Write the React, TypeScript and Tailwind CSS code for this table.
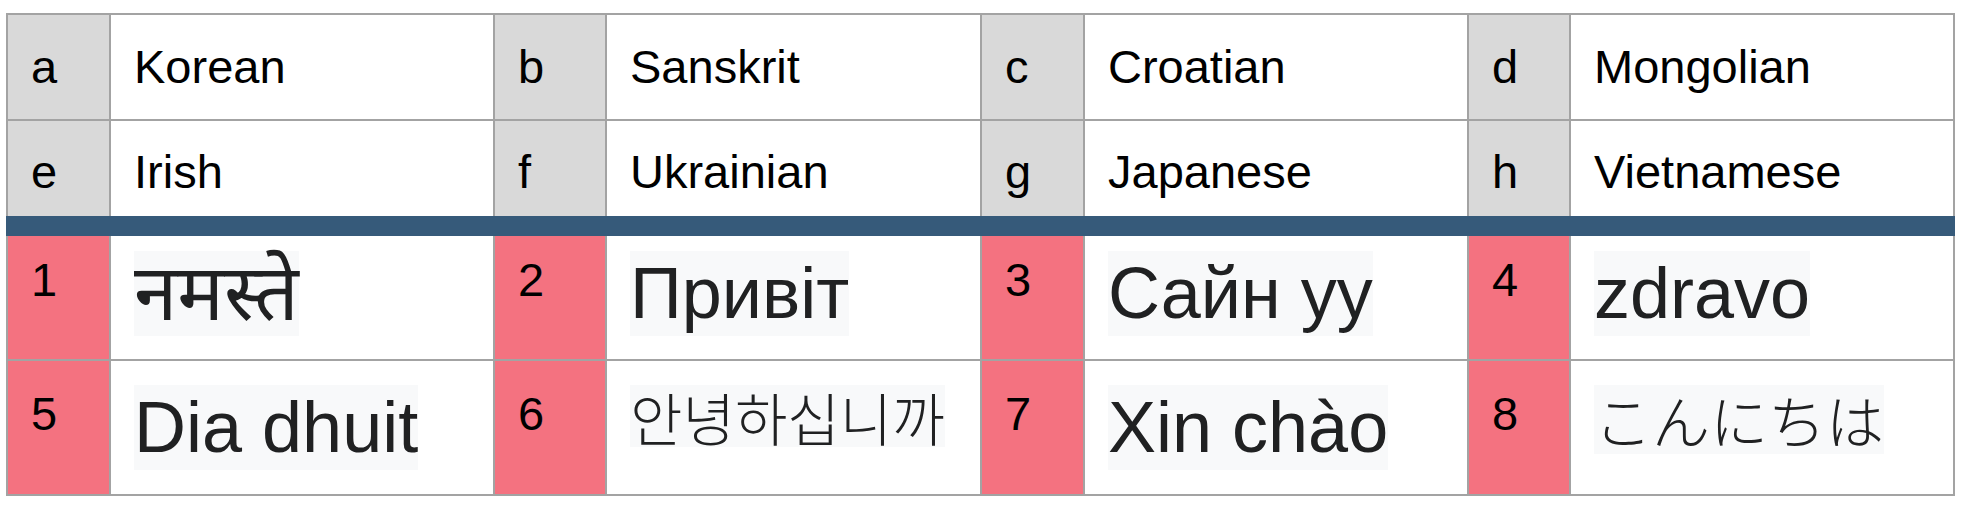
const cols =
  "grid grid-cols-[103px_384px_112px_375px_103px_384px_102px_382px]";

const header = [
  ["a", "Korean", "b", "Sanskrit", "c", "Croatian", "d", "Mongolian"],
  ["e", "Irish", "f", "Ukrainian", "g", "Japanese", "h", "Vietnamese"],
];

type Phrase = { text: string; cls: string };

const rowA: [string, Phrase][] = [
  ["1", { text: "नमस्ते", cls: "text-[78px] leading-[85px]" }],
  ["2", { text: "Привіт", cls: "text-[72px] leading-[85px]" }],
  ["3", { text: "Сайн уу", cls: "text-[72px] leading-[85px]" }],
  ["4", { text: "zdravo", cls: "text-[72px] leading-[85px]" }],
];

const rowB: [string, Phrase][] = [
  ["5", { text: "Dia dhuit", cls: "text-[72px] leading-[85px]" }],
  [
    "6",
    {
      text: "안녕하십니까",
      cls: "text-[57px] leading-[62px] font-light font-['Noto_Sans_CJK_KR',sans-serif]",
    },
  ],
  ["7", { text: "Xin chào", cls: "text-[72px] leading-[85px]" }],
  [
    "8",
    {
      text: "こんにちは",
      cls: "text-[58px] leading-[69px] font-light font-['Noto_Sans_CJK_JP',sans-serif]",
    },
  ],
];

const HeadRow = ({ cells, className }: { cells: string[]; className: string }) => (
  <div className={`${cols} ${className}`}>
    {cells.map((c, i) => (
      <div
        key={i}
        className={`flex items-center pl-[23px] text-[47px] leading-[54px] text-black ${
          i % 2 === 0 ? "bg-[#d9d9d9]" : "bg-white"
        } ${i < 7 ? "border-r-2 border-[#a3a3a3]" : ""}`}
      >
        {c}
      </div>
    ))}
  </div>
);

const BodyRow = ({
  items,
  className,
  pad,
}: {
  items: [string, Phrase][];
  className: string;
  pad: string;
}) => (
  <div className={`${cols} ${className}`}>
    {items.map(([n, p], i) => (
      <div key={n} className="contents">
        <div
          className={`${pad} pl-[23px] bg-[#f47280] text-[47px] leading-[57px] text-black border-r-2 border-[#a3a3a3]`}
        >
          {n}
        </div>
        <div
          className={`${pad} pl-[23px] bg-white ${
            i < 3 ? "border-r-2 border-[#a3a3a3]" : ""
          }`}
        >
          <span
            className={`inline-block whitespace-nowrap bg-[#f8f9fa] text-[#202122] ${p.cls}`}
          >
            {p.text}
          </span>
        </div>
      </div>
    ))}
  </div>
);

export default function App() {
  return (
    <div className="min-h-[508px] bg-white pl-[6px] pt-[13px] font-['Liberation_Sans','Noto_Sans','Noto_Sans_CJK_KR',sans-serif]">
      <div className="w-[1949px]">
        <div className="border-x-2 border-t-2 border-[#a3a3a3]">
          <HeadRow cells={header[0]} className="h-[106px] border-b-2 border-[#a3a3a3]" />
          <HeadRow cells={header[1]} className="h-[95px] [&>div]:pt-[7px]" />
        </div>
        <div className="h-[20px] bg-[#365a7a]" />
        <div className="border-x-2 border-b-2 border-[#a3a3a3]">
          <BodyRow items={rowA} className="h-[125px] border-b-2 border-[#a3a3a3]" pad="pt-[15px]" />
          <BodyRow items={rowB} className="h-[133px]" pad="pt-[24px]" />
        </div>
      </div>
    </div>
  );
}
